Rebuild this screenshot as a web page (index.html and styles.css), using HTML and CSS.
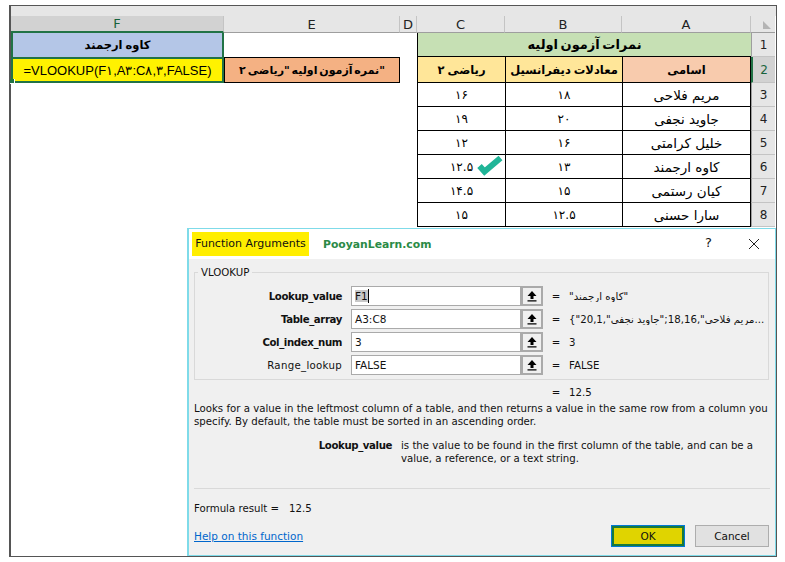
FILE: index.html
```html
<!DOCTYPE html>
<html lang="en">
<head>
<meta charset="utf-8">
<title>VLOOKUP Function Arguments</title>
<link rel="stylesheet" href="styles.css">
</head>
<body>
<div class="frame">
  <div class="sheet">
    <div class="colhead active">F</div>
    <div class="colhead">E</div>
    <div class="colhead">D</div>
    <div class="colhead">C</div>
    <div class="colhead">B</div>
    <div class="colhead">A</div>
    <div class="colhead corner"><svg width="10" height="10" viewBox="0 0 10 10"><path d="M1 9V1L9 9Z" fill="#b4b4b4"/></svg></div>

    <div class="cell selected-top bold">کاوه ارجمند</div>
    <div class="cell blank"></div>
    <div class="cell blank"></div>
    <div class="cell title bold">نمرات آزمون اولیه</div>
    <div class="rowhead">1</div>

    <div class="cell selected-main">=VLOOKUP(F۱,A۳:C۸,۳,FALSE)<span class="handle"></span></div>
    <div class="cell label-e bold">نمره آزمون اولیه "ریاضی ۲"</div>
    <div class="cell blank"></div>
    <div class="cell b c-yellow bold">ریاضی ۲</div>
    <div class="cell b c-yellow bold">معادلات دیفرانسیل</div>
    <div class="cell b last c-peach bold">اسامی</div>
    <div class="rowhead current">2</div>

    <div class="cell empty2"></div>
    <div class="cell b num">۱۶</div><div class="cell b num">۱۸</div><div class="cell b last name">مریم فلاحی</div>
    <div class="rowhead">3</div>

    <div class="cell empty2"></div>
    <div class="cell b num">۱۹</div><div class="cell b num">۲۰</div><div class="cell b last name">جاوید نجفی</div>
    <div class="rowhead">4</div>

    <div class="cell empty2"></div>
    <div class="cell b num">۱۲</div><div class="cell b num">۱۶</div><div class="cell b last name">خلیل کرامتی</div>
    <div class="rowhead">5</div>

    <div class="cell empty2"></div>
    <div class="cell b num check-cell">۱۲.۵
      <svg class="check" width="30" height="26" viewBox="0 0 30 26"><path d="M4.5 12L9.5 17.5L25.5 4" fill="none" stroke="#20b598" stroke-width="6"/></svg>
    </div>
    <div class="cell b num">۱۳</div><div class="cell b last name">کاوه ارجمند</div>
    <div class="rowhead">6</div>

    <div class="cell empty2"></div>
    <div class="cell b num">۱۴.۵</div><div class="cell b num">۱۵</div><div class="cell b last name">کیان رستمی</div>
    <div class="rowhead">7</div>

    <div class="cell empty2"></div>
    <div class="cell b num">۱۵</div><div class="cell b num">۱۲.۵</div><div class="cell b last name">سارا حسنی</div>
    <div class="rowhead">8</div>
  </div>

  <section class="dialog">
    <header class="titlebar">
      <span class="dtitle">Function Arguments</span>
      <span class="brand">PooyanLearn.com</span>
      <span class="help-q">?</span>
      <svg class="close" width="12" height="12" viewBox="0 0 12 12"><path d="M1 1L11 11M11 1L1 11" stroke="#222" stroke-width="1" fill="none"/></svg>
    </header>
    <div class="dbody">
      <fieldset class="group">
        <legend>VLOOKUP</legend>
        <div class="arg">
          <span class="argname strong">Lookup_value</span>
          <span class="field"><span class="sel">F1</span><span class="caret"></span></span>
          <span class="pick"><svg width="12" height="12" viewBox="0 0 12 12"><path d="M6 1L10.5 6H7.5V9H4.5V6H1.5ZM1.5 10.2H10.5V11.4H1.5Z" fill="#000"/></svg></span>
          <span class="eq">=</span>
          <span class="val">"کاوه ارجمند"</span>
        </div>
        <div class="arg">
          <span class="argname strong">Table_array</span>
          <span class="field">A3:C8</span>
          <span class="pick"><svg width="12" height="12" viewBox="0 0 12 12"><path d="M6 1L10.5 6H7.5V9H4.5V6H1.5ZM1.5 10.2H10.5V11.4H1.5Z" fill="#000"/></svg></span>
          <span class="eq">=</span>
          <span class="val">{"20,1,"<bdi>جاوید نجفی</bdi>";18,16,"<bdi>مریم فلاحی</bdi>...</span>
        </div>
        <div class="arg">
          <span class="argname strong">Col_index_num</span>
          <span class="field">3</span>
          <span class="pick"><svg width="12" height="12" viewBox="0 0 12 12"><path d="M6 1L10.5 6H7.5V9H4.5V6H1.5ZM1.5 10.2H10.5V11.4H1.5Z" fill="#000"/></svg></span>
          <span class="eq">=</span>
          <span class="val">3</span>
        </div>
        <div class="arg">
          <span class="argname regular">Range_lookup</span>
          <span class="field">FALSE</span>
          <span class="pick"><svg width="12" height="12" viewBox="0 0 12 12"><path d="M6 1L10.5 6H7.5V9H4.5V6H1.5ZM1.5 10.2H10.5V11.4H1.5Z" fill="#000"/></svg></span>
          <span class="eq">=</span>
          <span class="val">FALSE</span>
        </div>
      </fieldset>
      <div class="result-line"><span class="eq">=</span><span class="val">12.5</span></div>
      <p class="desc">Looks for a value in the leftmost column of a table, and then returns a value in the same row from a column you specify. By default, the table must be sorted in an ascending order.</p>
      <div class="argdesc">
        <span class="strong">Lookup_value</span>
        <p>is the value to be found in the first column of the table, and can be a value, a reference, or a text string.</p>
      </div>
      <hr class="rule">
      <div class="formula">Formula result =<span class="fval">12.5</span></div>
      <footer class="actions">
        <a class="helplink" href="#">Help on this function</a>
        <button class="btn ok" type="button">OK</button>
        <button class="btn" type="button">Cancel</button>
      </footer>
    </div>
  </section>
</div>
</body>
</html>
```

FILE: styles.css
```css
* { box-sizing: border-box; }
html, body { margin: 0; padding: 0; background: #fff; }
body { width: 785px; height: 562px; overflow: hidden; padding: 5px 0 0 9px; }

.frame {
  position: relative;
  width: 768px;
  height: 552px;
  border: 1px solid #555;
  border-left-width: 2px;
  background: #fff;
  padding-top: 10px;
  box-shadow: inset 0 10px 0 #e6e6e6;
}

.sheet {
  display: grid;
  grid-template-columns: 213px 176px 17px 88px 117px 129px 24px;
  grid-template-rows: 17px 24px 26px repeat(6, 24px);
  font: 11.5px "DejaVu Sans", sans-serif;
  color: #000;
}

.colhead {
  background: #e6e6e6;
  border-right: 1px solid #c4c4c4;
  border-bottom: 1px solid #9e9e9e;
  display: flex;
  align-items: center;
  justify-content: center;
  font: 13px "DejaVu Sans", sans-serif;
  color: #222;
}
.colhead.active { background: #d2d2d2; color: #17633c; border-bottom: 2px solid #217346; }
.colhead.corner { justify-content: flex-end; align-items: flex-end; padding: 0 3px 2px 0; border-right: 0; }
.rowhead {
  background: #e6e6e6;
  border-left: 1px solid #9e9e9e;
  border-bottom: 1px solid #c4c4c4;
  display: flex;
  align-items: center;
  justify-content: center;
  font-size: 12px;
  color: #222;
}
.rowhead.current { background: #d2d2d2; color: #17633c; border-left: 2px solid #217346; }

.cell { display: flex; align-items: center; justify-content: center; white-space: nowrap; }
.bold { font-weight: 700; word-spacing: -1px; }
.name { font-size: 13.5px; }
.num { font-size: 12px; letter-spacing: -0.7px; }
.blank { background: #fff; }
.empty2 { grid-column: 1 / span 3; background: #fff; }

.selected-top {
  background: #b4c6e7;
  border: 2px solid #217346;
  border-top: 0;
  border-bottom: 0;
}
.selected-main {
  position: relative;
  background: #fff200;
  border: 2px solid #217346;
  font: 13px "Liberation Sans", sans-serif;
}
.handle {
  position: absolute;
  left: -3px;
  bottom: -3px;
  width: 5px;
  height: 5px;
  background: #217346;
  border: 1px solid #fff;
  border-width: 0 1px 1px 0;
}
.label-e { background: #f4b183; border: 1px solid #000; font-size: 11px; word-spacing: -2px; }
.title {
  grid-column: 4 / span 3;
  background: #c6e0b4;
  border-left: 1px solid #000;
  border-bottom: 1px solid #000;
  font-size: 13px;
  word-spacing: -2px;
}
.b { border-left: 1px solid #000; border-bottom: 1px solid #000; }
.last { border-right: 1px solid #000; }
.c-yellow { background: #ffe699; }
.c-peach { background: #f8cbad; }
.check-cell { position: relative; }
.check { position: absolute; right: 0; top: -1px; }

.dialog {
  position: absolute;
  left: 176px;
  top: 222px;
  width: 589px;
  height: 328px;
  background: #f0f0f0;
  border: 1px solid #7fdbe9;
  border-left-width: 2px;
  font: 10.2px "DejaVu Sans", sans-serif;
  color: #111;
}
.titlebar {
  position: relative;
  height: 30px;
  background: #fff;
  display: flex;
  align-items: center;
  padding: 0 0 0 3px;
}
.dtitle {
  background: #ffee00;
  height: 24px;
  width: 117px;
  line-height: 24px;
  text-align: center;
  font-size: 11px;
}
.brand { margin-left: 14px; color: #2b8a46; font: 700 10.8px "DejaVu Sans", sans-serif; }
.help-q { position: absolute; right: 63px; top: 6px; font-size: 13px; }
.close { position: absolute; right: 15px; top: 9px; }

.dbody { padding: 7px 6px 0 5px; }
.group {
  margin: 0;
  padding: 7px 0 0;
  height: 114px;
  border: 1px solid #d9d9d9;
  min-width: 0;
}
.group legend { padding: 0 3px; margin-left: 3px; line-height: 13px; }

.arg {
  display: grid;
  grid-template-columns: 156px 170px 22px 26px 1fr;
  align-items: center;
  height: 20px;
  margin-bottom: 3px;
}
.argname { text-align: right; padding-right: 9px; }
.strong { font-weight: 700; letter-spacing: -0.4px; }
.regular { letter-spacing: 0.3px; }
.field {
  height: 20px;
  background: #fff;
  border: 1px solid #aaa;
  padding: 0 3px;
  display: flex;
  align-items: center;
  font-size: 10.5px;
}
.sel { background: #c8c8c8; }
.caret { width: 1px; height: 14px; background: #000; }
.pick {
  height: 20px;
  background: #f0f0f0;
  border: 2px solid #aaa;
  display: flex;
  align-items: center;
  justify-content: center;
}
.eq { text-align: center; }
.val { white-space: nowrap; overflow: hidden; }

.result-line {
  display: grid;
  grid-template-columns: 349px 26px 1fr;
  height: 13px;
  margin-top: 6px;
  line-height: 13px;
}
.result-line .eq { grid-column: 2; }

.desc { margin: 3px 0 0; line-height: 13px; width: 578px; }
.argdesc {
  display: grid;
  grid-template-columns: 198px 368px;
  column-gap: 9px;
  margin-top: 11px;
  line-height: 13px;
}
.argdesc .strong { text-align: right; }
.argdesc p { margin: 0; }
.rule { margin: 23px 0 0; border: 0; border-top: 1px solid #d9d9d9; width: 576px; }
.formula { margin-top: 13px; line-height: 13px; }
.fval { margin-left: 10px; }
.actions { display: flex; align-items: center; margin-top: 10px; height: 22px; }
.helplink { color: #0066cc; text-decoration: underline; margin-right: auto; font-size: 10.5px; }
.btn {
  width: 74px;
  height: 22px;
  margin-left: 10px;
  padding: 0;
  background: #e1e1e1;
  border: 1px solid #adadad;
  font: 10.5px "DejaVu Sans", sans-serif;
  color: #111;
}
.btn.ok {
  background: #e0d400;
  border: 1px solid #0078d7;
  box-shadow: inset 0 0 0 2px #1a7a3a;
}
```
